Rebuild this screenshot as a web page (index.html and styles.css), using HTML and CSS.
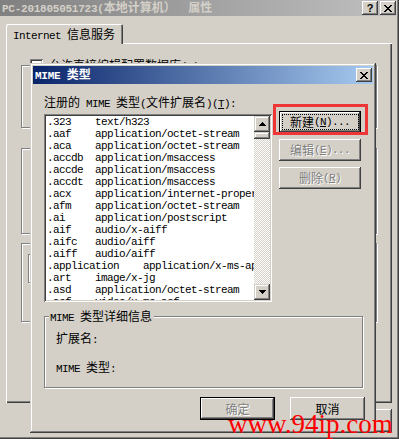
FILE: index.html
```html
<!DOCTYPE html>
<html lang="zh-CN">
<head>
  <meta charset="UTF-8">
  <meta name="viewport" content="width=device-width, initial-scale=1.0">
  <title>PC-201805051723(本地计算机) 属性</title>
  <link rel="stylesheet" href="styles.css">
</head>
<body>
  <div class="window">
    <div class="titlebar">
      <span class="title"><span class="en">PC-201805051723(</span>本地计算机）<span class="en">  </span>属性</span>
      <span class="tb-buttons">
        <span class="tb-btn help">?</span>
        <span class="tb-btn">
          <svg width="8" height="7" viewBox="0 0 8 7"><path d="M0 0h2v1H0zM6 0h2v1H6zM1 1h2v1H1zM5 1h2v1H5zM2 2h4v1H2zM3 3h2v1H3zM2 4h4v1H2zM1 5h2v1H1zM5 5h2v1H5zM0 6h2v1H0zM6 6h2v1H6z"/></svg>
        </span>
      </span>
    </div>

    <div class="tabs">
      <div class="tab"><span class="en">Internet </span>信息服务</div>
    </div>

    <div class="panel">
      <div class="group g1">
        <div class="caption"><span class="check"></span><span>允许直接编辑配置数据库<span class="en">(<u>U</u>)</span></span></div>
      </div>
      <div class="group g2"></div>
      <div class="group g3">
        <div class="inner-box"></div>
      </div>
    </div>

    <div class="actions">
      <button class="btn">确定</button>
      <button class="btn">取消</button>
      <button class="btn">应用<span class="en">(<u>A</u>)</span></button>
    </div>
  </div>

  <!-- MIME dialog sits on top of the properties window -->
  <div class="dialog">
    <div class="titlebar active">
      <span class="title"><span class="en">MIME </span>类型</span>
      <span class="tb-btn">
        <svg width="8" height="7" viewBox="0 0 8 7"><path d="M0 0h2v1H0zM6 0h2v1H6zM1 1h2v1H1zM5 1h2v1H5zM2 2h4v1H2zM3 3h2v1H3zM2 4h4v1H2zM1 5h2v1H1zM5 5h2v1H5zM0 6h2v1H0zM6 6h2v1H6z"/></svg>
      </span>
    </div>

    <div class="dialog-body">
      <div class="browse">
        <div class="list-col">
          <div class="label">注册的<span class="en"> MIME </span>类型<span class="en">(</span>文件扩展名<span class="en">)(<u>T</u>):</span></div>
          <div class="listbox">
            <div class="items">
              <div class="row">.323&#9;text/h323</div>
              <div class="row">.aaf&#9;application/octet-stream</div>
              <div class="row">.aca&#9;application/octet-stream</div>
              <div class="row">.accdb&#9;application/msaccess</div>
              <div class="row">.accde&#9;application/msaccess</div>
              <div class="row">.accdt&#9;application/msaccess</div>
              <div class="row">.acx&#9;application/internet-property-stream</div>
              <div class="row">.afm&#9;application/octet-stream</div>
              <div class="row">.ai&#9;application/postscript</div>
              <div class="row">.aif&#9;audio/x-aiff</div>
              <div class="row">.aifc&#9;audio/aiff</div>
              <div class="row">.aiff&#9;audio/aiff</div>
              <div class="row">.application&#9;application/x-ms-application</div>
              <div class="row">.art&#9;image/x-jg</div>
              <div class="row">.asd&#9;application/octet-stream</div>
              <div class="row">.asf&#9;video/x-ms-asf</div>
            </div>
            <div class="scrollbar">
              <span class="sb-btn">
                <svg width="7" height="4" viewBox="0 0 7 4"><path d="M3 0h1v1h1v1h1v1h1v1H0V3h1V2h1V1h1z"/></svg>
              </span>
              <span class="thumb"></span>
              <span class="track"></span>
              <span class="sb-btn">
                <svg width="7" height="4" viewBox="0 0 7 4"><path d="M0 0h7v1H6v1H5v1H4v1H3V3H2V2H1V1H0z"/></svg>
              </span>
            </div>
          </div>
        </div>

        <div class="side">
          <div class="highlight">
            <button class="btn default focus">新建<span class="en">(<u>N</u>)...</span></button>
          </div>
          <button class="btn" disabled>编辑<span class="en">(<u>E</u>)...</span></button>
          <button class="btn" disabled>删除<span class="en">(<u>R</u>)</span></button>
        </div>
      </div>

      <div class="details">
        <div class="legend"><span class="en">MIME </span>类型详细信息</div>
        <div class="field">扩展名<span class="en">:</span></div>
        <div class="field field-gap"><span class="en">MIME </span>类型<span class="en">:</span></div>
      </div>

      <div class="dialog-actions">
        <button class="btn default" disabled>确定</button>
        <button class="btn">取消</button>
      </div>
    </div>
  </div>

  <div class="watermark">www.94ip.com</div>
</body>
</html>
```

FILE: styles.css
```css
body {
  margin: 0;
  background: #d4d0c8;
  font-family: "Noto Sans CJK SC", sans-serif;
  font-size: 12px;
  line-height: 12px;
  color: #000;
  overflow: hidden;
}
.en {
  font-family: "Liberation Mono", monospace;
  font-size: 11px;
  letter-spacing: -0.6px;
}
u {
  text-underline-offset: 1px;
}

/* outer properties window */
.window {
  box-sizing: border-box;
  width: 403px;
  height: 442px;
  margin: -3px 0 0 -4px;
  padding: 3px;
  background: #d4d0c8;
  box-shadow: inset -1px -1px #404040, inset 1px 1px #d4d0c8, inset -2px -2px #808080, inset 2px 2px #fff;
}
.titlebar {
  display: flex;
  align-items: center;
  justify-content: space-between;
  height: 16px;
  padding-left: 3px;
  background: linear-gradient(to right, #808080, #c0c0c0);
  color: #d4d0c8;
  font-weight: bold;
  white-space: pre;
}
.titlebar .en {
  letter-spacing: -0.25px;
}
.titlebar.active {
  height: 18px;
  padding: 0 1px 0 2px;
  background: linear-gradient(to right, #0a246a, #a6caf0);
  color: #fff;
}
.tb-buttons {
  display: flex;
  gap: 2px;
}
.tb-btn {
  display: flex;
  align-items: center;
  justify-content: center;
  width: 16px;
  height: 14px;
  background: #d4d0c8;
  color: #000;
  box-shadow: inset -1px -1px #404040, inset 1px 1px #fff, inset -2px -2px #808080, inset 2px 2px #d4d0c8;
}
.tb-btn.help {
  font: bold 11px "Liberation Sans", sans-serif;
}

.tabs {
  display: flex;
  margin: 8px 0 -1px 7px;
}
.tab {
  position: relative;
  z-index: 1;
  box-sizing: border-box;
  width: 117px;
  height: 20px;
  padding-left: 7px;
  line-height: 20px;
  white-space: pre;
  background: #d4d0c8;
  border-radius: 2px 2px 0 0;
  box-shadow: inset 1px 1px #fff, inset -1px 0 #404040, inset -2px 0 #808080;
}
.panel {
  box-sizing: border-box;
  width: 386px;
  height: 360px;
  margin-left: 7px;
  padding: 22px 0 0 15px;
  box-shadow: inset 1px 1px #fff, inset -1px -1px #404040, inset -2px -2px #808080;
}
.group {
  box-sizing: border-box;
  width: 356px;
  border: 1px solid #808080;
  box-shadow: inset 1px 1px #fff, 1px 1px #fff;
}
.g1 {
  height: 63px;
}
.g2 {
  height: 86px;
  margin-top: 20px;
}
.g3 {
  height: 79px;
  margin-top: 9px;
  padding: 10px 0 0 6px;
}
.caption {
  display: flex;
  align-items: center;
  gap: 6px;
  margin: -7px 0 0 8px;
  height: 13px;
  white-space: nowrap;
}
.caption > span:last-child {
  background: #d4d0c8;
  padding-right: 2px;
}
.check {
  width: 13px;
  height: 13px;
  background: #fff;
  box-shadow: inset 1px 1px #808080, inset -1px -1px #fff, inset 2px 2px #404040, inset -2px -2px #d4d0c8;
}
.inner-box {
  box-sizing: border-box;
  width: 300px;
  height: 29px;
  border: 1px solid #808080;
  box-shadow: inset 1px 1px #fff, 1px 1px #fff;
}
.actions {
  display: flex;
  justify-content: flex-end;
  gap: 6px;
  margin-top: 6px;
  padding-right: 4px;
}
.actions .btn {
  width: 75px;
  height: 23px;
}

/* buttons */
.btn {
  position: relative;
  box-sizing: border-box;
  display: flex;
  align-items: center;
  justify-content: center;
  border: 0;
  padding: 0;
  background: #d4d0c8;
  font: inherit;
  line-height: 12px;
  color: #000;
  white-space: pre;
  box-shadow: inset -1px -1px #404040, inset 1px 1px #fff, inset -2px -2px #808080, inset 2px 2px #d4d0c8;
}
.btn.default {
  box-shadow: inset 0 0 0 1px #000, inset -2px -2px #404040, inset 2px 2px #fff, inset -3px -3px #808080;
}
.btn.focus::before {
  content: "";
  position: absolute;
  inset: 3px 2px 3px 3px;
  border: 1px dotted #000;
}
.btn:disabled {
  color: #808080;
  text-shadow: 1px 1px 0 #fff;
}

/* MIME dialog */
.dialog {
  position: absolute;
  left: 30px;
  top: 63px;
  box-sizing: border-box;
  width: 346px;
  height: 370px;
  padding: 3px;
  background: #d4d0c8;
  box-shadow: inset -1px -1px #404040, inset 1px 1px #d4d0c8, inset -2px -2px #808080, inset 2px 2px #fff;
}
.dialog-body {
  padding: 12px 0 0 11px;
}
.browse {
  display: flex;
  align-items: flex-start;
}
.list-col {
  width: 228px;
}
.label {
  height: 12px;
  white-space: pre;
}
.listbox {
  box-sizing: border-box;
  display: flex;
  width: 228px;
  height: 188px;
  margin-top: 6px;
  padding: 2px;
  background: #fff;
  box-shadow: inset 1px 1px #808080, inset -1px -1px #fff, inset 2px 2px #404040, inset -2px -2px #d4d0c8;
}
.items {
  flex: 1;
  overflow: hidden;
  padding-left: 1px;
  font-family: "Liberation Mono", monospace;
  font-size: 11px;
  letter-spacing: -0.6px;
  line-height: 12px;
  tab-size: 48px;
}
.row {
  white-space: pre;
}
.scrollbar {
  display: flex;
  flex-direction: column;
  width: 16px;
}
.sb-btn {
  display: flex;
  align-items: center;
  justify-content: center;
  height: 16px;
  background: #d4d0c8;
  box-shadow: inset -1px -1px #404040, inset 1px 1px #d4d0c8, inset -2px -2px #808080, inset 2px 2px #fff;
}
.thumb {
  height: 7px;
  background: #d4d0c8;
  box-shadow: inset -1px -1px #404040, inset 1px 1px #d4d0c8, inset -2px -2px #808080, inset 2px 2px #fff;
}
.track {
  flex: 1;
  background: repeating-conic-gradient(#fff 0 25%, #d4d0c8 0 50%) 0 0 / 2px 2px;
}
.side {
  display: flex;
  flex-direction: column;
  gap: 6px;
  margin: 15px 0 0 7px;
}
.side .btn {
  width: 82px;
  height: 22px;
}
.highlight {
  position: relative;
}
.highlight::after {
  content: "";
  position: absolute;
  left: -6px;
  top: -7px;
  box-sizing: border-box;
  width: 95px;
  height: 31px;
  border: 3px solid #ee3636;
}
.details {
  box-sizing: border-box;
  width: 319px;
  height: 72px;
  margin-top: 14px;
  padding-left: 11px;
  border: 1px solid #808080;
  box-shadow: inset 1px 1px #fff, 1px 1px #fff;
}
.legend {
  width: fit-content;
  margin: -7px 0 0 -7px;
  padding: 0 2px 0 1px;
  background: #d4d0c8;
  white-space: pre;
}
.field {
  margin-top: 8px;
  white-space: pre;
}
.field-gap {
  margin-top: 15px;
}
.dialog-actions {
  display: flex;
  justify-content: flex-end;
  gap: 15px;
  width: 321px;
  margin-top: 9px;
}
.dialog-actions .btn {
  width: 75px;
  height: 23px;
}

.watermark {
  position: absolute;
  left: 228px;
  top: 411px;
  font-family: "Liberation Serif", serif;
  font-size: 27px;
  line-height: 27px;
  color: #f00;
}
```
